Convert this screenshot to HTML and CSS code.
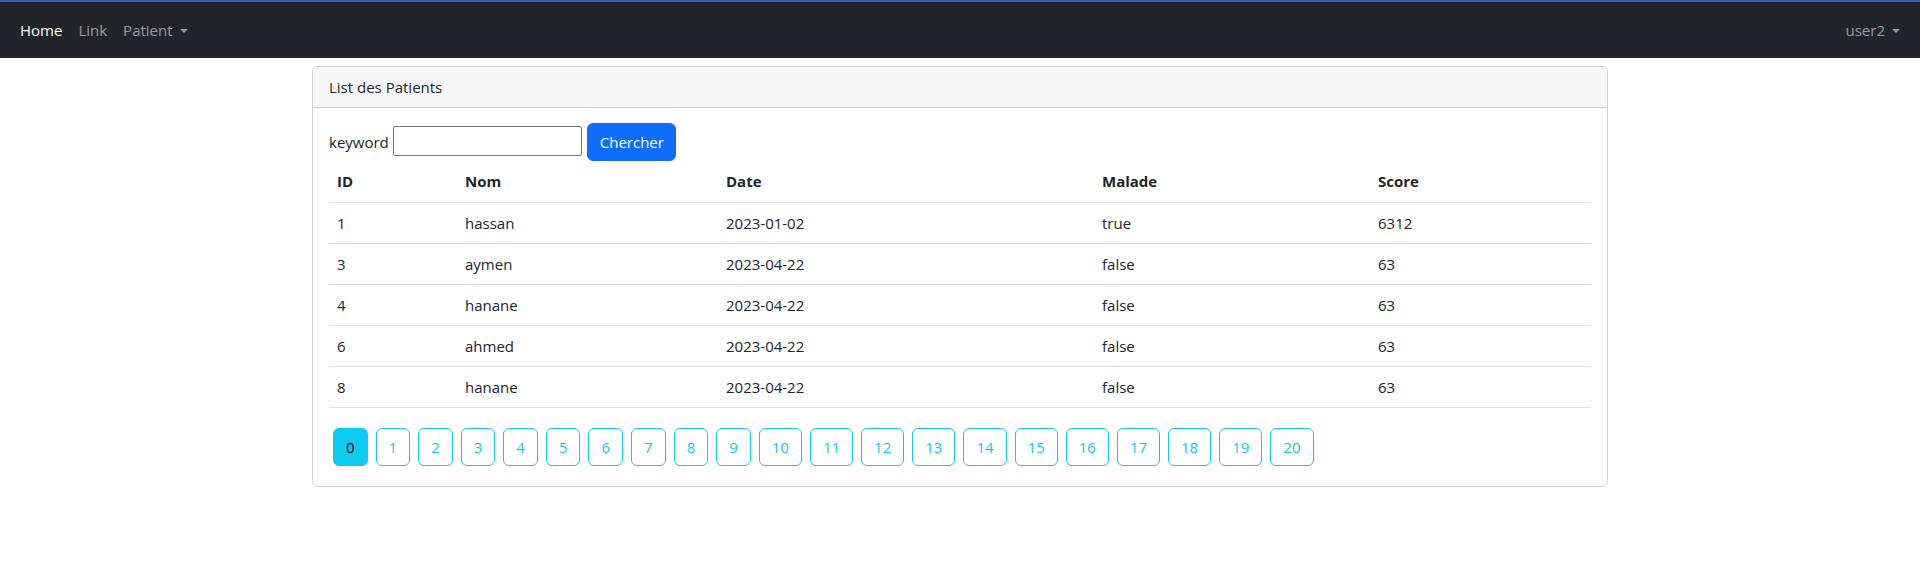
FILE: index.html
```html
<!DOCTYPE html>
<html lang="fr">
<head>
<meta charset="utf-8">
<title>Patients</title>
<link rel="stylesheet" href="styles.css">
</head>
<body>
<nav class="navbar">
  <ul class="nav-left">
    <li><a class="nav-link active" href="#">Home</a></li>
    <li><a class="nav-link" href="#">Link</a></li>
    <li><a class="nav-link dropdown" href="#">Patient</a></li>
  </ul>
  <ul class="nav-right">
    <li><a class="nav-link dropdown" href="#">user2</a></li>
  </ul>
</nav>
<main class="container">
  <section class="card">
    <div class="card-header">List des Patients</div>
    <div class="card-body">
      <form class="search">
        <label for="kw">keyword</label>
        <input id="kw" type="text" class="kw-input">
        <button type="button" class="btn btn-primary">Chercher</button>
      </form>
      <table class="table">
        <colgroup>
          <col class="c-id"><col class="c-nom"><col class="c-date"><col class="c-malade"><col class="c-score">
        </colgroup>
        <thead>
          <tr><th>ID</th><th>Nom</th><th>Date</th><th>Malade</th><th>Score</th></tr>
        </thead>
        <tbody>
          <tr><td>1</td><td>hassan</td><td>2023-01-02</td><td>true</td><td>6312</td></tr>
          <tr><td>3</td><td>aymen</td><td>2023-04-22</td><td>false</td><td>63</td></tr>
          <tr><td>4</td><td>hanane</td><td>2023-04-22</td><td>false</td><td>63</td></tr>
          <tr><td>6</td><td>ahmed</td><td>2023-04-22</td><td>false</td><td>63</td></tr>
          <tr><td>8</td><td>hanane</td><td>2023-04-22</td><td>false</td><td>63</td></tr>
        </tbody>
      </table>
      <ul class="pages">
        <li><a class="btn page active" href="#">0</a></li>
        <li><a class="btn page" href="#">1</a></li>
        <li><a class="btn page" href="#">2</a></li>
        <li><a class="btn page" href="#">3</a></li>
        <li><a class="btn page" href="#">4</a></li>
        <li><a class="btn page" href="#">5</a></li>
        <li><a class="btn page" href="#">6</a></li>
        <li><a class="btn page" href="#">7</a></li>
        <li><a class="btn page" href="#">8</a></li>
        <li><a class="btn page" href="#">9</a></li>
        <li><a class="btn page" href="#">10</a></li>
        <li><a class="btn page" href="#">11</a></li>
        <li><a class="btn page" href="#">12</a></li>
        <li><a class="btn page" href="#">13</a></li>
        <li><a class="btn page" href="#">14</a></li>
        <li><a class="btn page" href="#">15</a></li>
        <li><a class="btn page" href="#">16</a></li>
        <li><a class="btn page" href="#">17</a></li>
        <li><a class="btn page" href="#">18</a></li>
        <li><a class="btn page" href="#">19</a></li>
        <li><a class="btn page" href="#">20</a></li>
      </ul>
    </div>
  </section>
</main>
</body>
</html>
```
FILE: styles.css
```css
* { box-sizing: border-box; }
html, body {
  margin: 0;
  padding: 0;
  background: #fff;
}
body {
  font-family: "Open Sans", "Noto Sans", "Liberation Sans", sans-serif;
  font-size: 16px;
  line-height: 24px;
  color: #212529;
}
ul { list-style: none; margin: 0; padding: 0; }
a { text-decoration: none; }

.navbar {
  display: flex;
  justify-content: space-between;
  align-items: center;
  background: #212529;
  border-top: 2px solid #2a62b4;
  height: 58px;
  padding: 0 12px;
}
.nav-left, .nav-right {
  display: flex;
  align-items: center;
}
.nav-link {
  display: block;
  padding: 8px;
  color: rgba(255, 255, 255, 0.55);
  font-size: 15px;
}
.nav-link.active { color: #fff; }
.dropdown::after {
  content: "";
  display: inline-block;
  margin-left: 7px;
  vertical-align: 3px;
  border-top: 4.5px solid currentColor;
  border-left: 4.5px solid transparent;
  border-right: 4.5px solid transparent;
}

.container {
  width: 1320px;
  margin: 8px auto 0;
  padding: 0 12px;
}
.card {
  border: 1px solid rgba(0, 0, 0, 0.175);
  border-radius: 6px;
  overflow: hidden;
}
.card-header {
  background: #f7f7f7;
  border-bottom: 1px solid rgba(0, 0, 0, 0.175);
  padding: 8px 16px;
  font-size: 15px;
}
.card-body {
  padding: 15px 16px 16px;
}

.search {
  display: flex;
  align-items: center;
  height: 38px;
  font-size: 15px;
}
.search label { margin-right: 4px; }
.kw-input {
  width: 189px;
  height: 30px;
  border: 1px solid #767676;
  border-radius: 2px;
  padding: 1px 2px;
  font: inherit;
  margin-top: -2px;
}
.btn {
  display: inline-block;
  font-family: inherit;
  font-size: 15px;
  line-height: 24px;
  padding: 6px 12px;
  border: 1px solid transparent;
  border-radius: 6px;
  text-align: center;
}
.btn-primary {
  background: #0d6efd;
  border-color: #0d6efd;
  color: #fff;
  margin-left: 5px;
  width: 89px;
  height: 38px;
}

.table {
  width: 100%;
  border-collapse: collapse;
  margin-bottom: 16px;
  font-size: 15px;
}
.c-id { width: 128px; }
.c-nom { width: 261px; }
.c-date { width: 376px; }
.c-malade { width: 276px; }
.table th, .table td {
  text-align: left;
  padding: 8px;
  border-bottom: 1px solid #dee2e6;
  height: 41px;
}
.table th { font-weight: 700; }

.pages {
  display: flex;
  flex-wrap: wrap;
}
.page {
  margin: 4px;
  min-width: 34px;
  height: 38px;
  padding: 6px 12px;
  font-size: 15px;
  color: #0dcaf0;
  border-color: #0dcaf0;
  background: #fff;
}
.page.active {
  background: #0dcaf0;
  color: #000;
}
```
